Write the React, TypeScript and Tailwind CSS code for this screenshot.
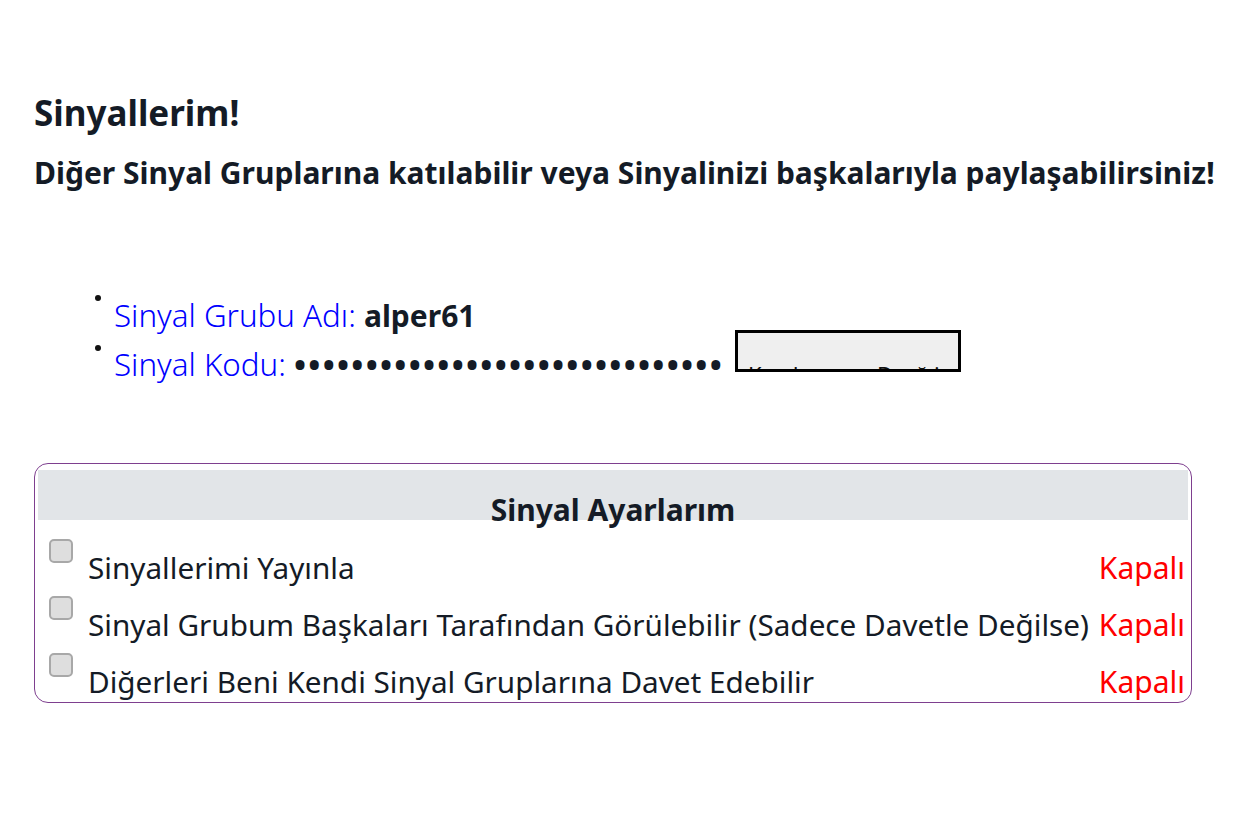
const rows = [
  "Sinyallerimi Yayınla",
  "Sinyal Grubum Başkaları Tarafından Görülebilir (Sadece Davetle Değilse)",
  "Diğerleri Beni Kendi Sinyal Gruplarına Davet Edebilir",
];

function Bullet() {
  return <span className="mr-[13px] mt-[5px] h-[6px] w-[6px] shrink-0 rounded-full bg-[#111]" />;
}

export default function App() {
  return (
    <div
      className="min-h-screen bg-white px-[34px] pt-[89px] text-[#141b26]"
      style={{ fontFamily: '"Noto Sans", "Open Sans", sans-serif' }}
    >
      <h1 className="text-[35px] font-bold leading-[48px]">Sinyallerim!</h1>
      <h2 className="mt-[16px] whitespace-nowrap text-[30px] font-bold leading-[40px]">
        Diğer Sinyal Gruplarına katılabilir veya Sinyalinizi başkalarıyla paylaşabilirsiniz!
      </h2>

      <ul className="mt-[97px] pl-[61px] text-[32px] leading-[49px]">
        <li className="flex items-start">
          <Bullet />
          <span>
            <span className="text-[31.3px] font-light text-[#0000ff]">Sinyal Grubu Adı: </span>
            <span className="text-[30px] font-bold">alper61</span>
          </span>
        </li>
        <li className="flex items-start">
          <Bullet />
          <span className="text-[31.3px] font-light text-[#0000ff]">Sinyal Kodu:&nbsp;</span>
          <span className="font-bold tracking-[2.3px]">••••••••••••••••••••••••••••••</span>
          {/* the label sits below the box, only its tops show */}
          <button className="-mt-[10px] ml-[11px] flex h-[42px] w-[226px] items-start overflow-hidden border-[3px] border-black bg-[#efefef] text-left text-[22px] leading-[26px] tracking-[5px] text-[#111]">
            <span className="mt-[28px] whitespace-nowrap pl-[10px]">Kodumu Değiştir</span>
          </button>
        </li>
      </ul>

      <div className="mt-[74px] h-[240px] w-[1158px] overflow-hidden rounded-[14px] border border-[#7e3f8f] px-[3px] pt-[6px]">
        <div className="flex h-[50px] items-end justify-center bg-[#e2e5e8]">
          <span className="-mb-[10px] text-[30px] font-bold leading-[40px]">Sinyal Ayarlarım</span>
        </div>
        <div className="pl-[11px] pr-[3px] pt-[19px]">
          {rows.map((r) => (
            <div key={r} className="flex h-[57px] items-start">
              <span className="h-[24px] w-[24px] shrink-0 rounded-[5px] border-2 border-[#a8a8a8] bg-[#dedede]" />
              <span className="mt-[9px] ml-[15px] min-w-0 flex-1 whitespace-nowrap text-[29.7px] leading-[40px]">{r}</span>
              <span className="mt-[9px] ml-[6px] shrink-0 text-[30px] leading-[40px] text-[#ff0000]">Kapalı</span>
            </div>
          ))}
        </div>
      </div>
    </div>
  );
}
